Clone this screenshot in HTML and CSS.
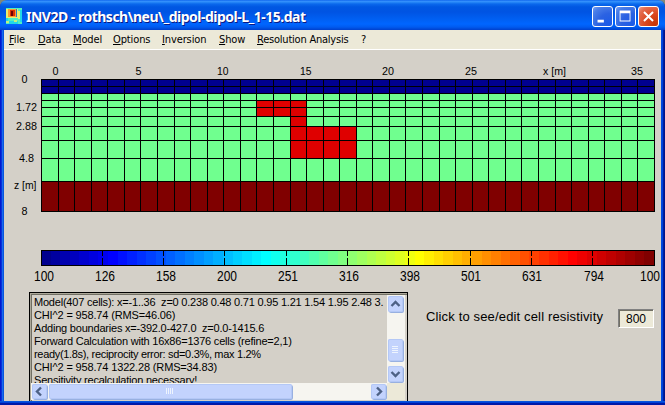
FILE: index.html
```html
<!DOCTYPE html>
<html lang="en">
<head>
<meta charset="utf-8">
<title>INV2D - rothsch\neu\_dipol-dipol-L_1-15.dat</title>
<link rel="stylesheet" href="styles.css">
</head>
<body>
<div class="window">
  <header class="titlebar">
    <svg class="app-icon" width="16" height="16" shape-rendering="crispEdges">
      <rect width="16" height="16" fill="#50f0c0"/>
      <path fill="#20d8e8" d="M0 9h2v4h-2zM14 2h2v12h-2zM3 13h9v3h-9z"/>
      <path fill="#e8f070" d="M0 1h12v9h-12zM12 3h2v8h-2z"/>
      <path fill="#ff9a30" d="M2 1h8v8h-8z"/>
      <path fill="#d83000" d="M4 2h5v6h-5z"/>
      <path fill="#700000" d="M5 3h2v5h-2z"/>
      <path fill="#2878c8" d="M10 1h1v8h-1z"/>
      <path fill="#c0f080" d="M0 13h3v2h-3zM8 12h3v2h-3z"/>
    </svg>
    <h1 class="title">INV2D - rothsch\neu\_dipol-dipol-L_1-15.dat</h1>
    <div class="controls">
      <svg class="control" viewBox="0 0 21 21"><path d="M5 14h7v3H5z" fill="#fff"/></svg>
      <svg class="control" viewBox="0 0 21 21"><path d="M4 4h12v12H4zM5 7v8h10V7z" fill="#fff" fill-rule="evenodd"/></svg>
      <svg class="control close" viewBox="0 0 21 21"><path d="M5.5 5.5l10 10M15.5 5.5l-10 10" stroke="#fff" stroke-width="2.2"/></svg>
    </div>
  </header>
  <nav class="menu">
    <span class="m-file"><u>F</u>ile</span><span class="m-data"><u>D</u>ata</span><span class="m-model"><u>M</u>odel</span><span class="m-options"><u>O</u>ptions</span><span class="m-inversion"><u>I</u>nversion</span><span class="m-show"><u>S</u>how</span><span class="m-res"><u>R</u>esolution Analysis</span><span>?</span>
  </nav>
  <main class="client">
    <svg class="plot" id="plot" width="657" height="240" viewBox="4 50 657 240"></svg>
    <div class="bottom">
      <section class="log">
        <div class="log-text">
          <p class="tight">Model(407 cells): x=-1..36&nbsp; z=0 0.238 0.48 0.71 0.95 1.21 1.54 1.95 2.48 3.</p>
          <p>CHI^2 = 958.74 (RMS=46.06)</p>
          <p class="tight">Adding boundaries x=-392.0-427.0&nbsp; z=0.0-1415.6</p>
          <p class="tight">Forward Calculation with 16x86=1376 cells (refine=2,1)</p>
          <p class="tighter">ready(1.8s), reciprocity error: sd=0.3%, max 1.2%</p>
          <p>CHI^2 = 958.74 1322.28 (RMS=34.83)</p>
          <p class="tight">Sensitivity recalculation necessary!</p>
        </div>
        <div class="vscroll">
          <svg class="sb" viewBox="0 0 15 16"><path d="M3.5 10l4-4 4 4" /></svg>
          <svg class="sb vthumb" viewBox="0 0 15 22"><path class="grip" d="M4 7.5h6M4 9.5h6M4 11.5h6M4 13.5h6"/></svg>
          <svg class="sb" viewBox="0 0 15 16"><path d="M3.5 6l4 4 4-4" /></svg>
        </div>
        <div class="hscroll">
          <svg class="sb" viewBox="0 0 15 15"><path d="M9 3.5l-4 4 4 4" /></svg>
          <svg class="sb hthumb" viewBox="0 0 243 15"><path class="grip" d="M117.5 4v6M119.5 4v6M121.5 4v6M123.5 4v6"/></svg>
          <svg class="sb last" viewBox="0 0 15 15"><path d="M6 3.5l4 4-4 4" /></svg>
        </div>
        <div class="corner"></div>
      </section>
      <span class="hint">Click to see/edit cell resistivity</span>
      <span class="value">800</span>
    </div>
  </main>
</div>
<script src="plot.js"></script>
</body>
</html>
```
FILE: styles.css
```css
* { box-sizing: border-box; }
body { margin: 0; background: #808878; overflow: hidden; }
h1, p { margin: 0; }
.window {
  width: 665px; height: 405px;
  display: flex; flex-direction: column;
  border-radius: 7px 7px 0 0;
  overflow: hidden;
  background:
    linear-gradient(180deg, #0855dd 0 1px, #0040d8 1px 2px, #0019a8 2px 4px) 0 401px / 100% 4px no-repeat,
    linear-gradient(90deg, #0019cf 0 1px, #0831d9 1px 2px, #166aee 2px 3px, #0855dd 3px 4px, transparent 4px 661px, #0048e0 661px 662px, #0040d8 662px 663px, #001ea0 663px 664px, #00138c 664px);
}
.titlebar {
  height: 30px; flex: none;
  display: flex; align-items: center;
  padding: 3px 6px 0 6px;
  background: linear-gradient(180deg, #0058e6 0, #3a93ff 1px, #2a8bf8 2px, #0a68ec 4px, #0057e2 7px, #0054e3 12px, #005ff2 19px, #0066ff 24px, #005bf0 27px, #0040cc 30px);
}
.app-icon { flex: none; margin-top: -1px; }
.title {
  flex: 1; margin-left: 4px; margin-top: 1px;
  font: bold 14px/20px "Noto Sans", sans-serif;
  letter-spacing: -0.5px;
  color: #fff; text-shadow: 1px 1px 0 #0a1883; white-space: pre;
}
.controls { display: flex; gap: 2px; }
.control {
  width: 21px; height: 21px;
  border: 1px solid #fff; border-radius: 3px;
  background: radial-gradient(circle at 85% 90%, #1c5be8 0, #2b62e2 45%, #4a7ee8 80%, #7ba2f4 100%);
}
.close { background: radial-gradient(circle at 85% 90%, #c83404 0, #dc4a22 45%, #e46d50 80%, #f0a08c 100%); }
.menu {
  height: 20px; flex: none; margin: 0 4px; padding: 0 0 0 5px;
  display: flex;
  background: #ece9d8; border-bottom: 1px solid #fff;
  font: 11px/19px "DejaVu Sans Condensed", "DejaVu Sans", sans-serif;
  letter-spacing: -0.12px;
  color: #000; white-space: pre;
}
.menu u { text-underline-offset: 1px; text-decoration-thickness: 1px; }
.m-file { width: 29px; }
.m-data { width: 35px; }
.m-model { width: 40px; }
.m-options { width: 49px; }
.m-inversion { width: 57px; }
.m-show { width: 38px; }
.m-res { width: 104px; letter-spacing: -0.22px; }
.client { height: 351px; flex: none; margin: 0 4px; background: #d4d0c8; overflow: hidden; }
.plot { display: block; font-family: "Liberation Sans", Arial, sans-serif; }
.axis { font-size: 11px; }
.scale { font-size: 14px; }
.bottom { display: flex; align-items: flex-start; padding: 2px 0 0 25px; }
.log {
  width: 379px; height: 130px; flex: none;
  display: grid;
  grid-template: 88px 17px / 1fr 18px;
  border: 1px solid #000; padding: 2px 2px 0 1px;
  box-shadow: inset 1px 1px #aca899, inset 2px 2px #716f64;
}
.log-text {
  overflow: hidden; padding: 1px 0 0 3px;
  font: 11px/13px "Liberation Sans", Arial, sans-serif;
  letter-spacing: -0.15px;
}
.log-text p { white-space: nowrap; }
.tight { letter-spacing: -0.21px; }
.tighter { letter-spacing: -0.32px; }
.vscroll, .hscroll { display: flex; padding: 1px; background: #f6f5f0; }
.vscroll { flex-direction: column; justify-content: space-between; }
.sb {
  display: block; width: 15px; height: 16px; flex: none;
  border-radius: 2px; background: #c3d3fd;
  box-shadow: inset 0 0 0 1px #b4c8f6, 1px 1px #98b0e0;
  fill: none; stroke: #4d6185; stroke-width: 2.4;
}
.vthumb { height: 22px; margin-top: 21px; }
.hscroll { gap: 2px; }
.hscroll .sb { height: 15px; }
.hscroll .hthumb { width: 243px; }
.last { margin-left: auto; }
.sb .grip { stroke: #eef4fe; stroke-width: 1; }
.corner { background: #ece9d8; }
.hint {
  margin: 16px 0 0 18px; width: 192px;
  font: 13px/18px "Liberation Sans", Arial, sans-serif; white-space: pre;
  letter-spacing: 0.15px;
}
.value {
  width: 36px; height: 19px; margin-top: 17px;
  border: 1px solid; border-color: #808080 #fff #fff #808080;
  box-shadow: inset 1px 1px #716f64;
  background: #ece9d8; text-align: center;
  font: 12px/19px "Liberation Sans", Arial, sans-serif;
}
```
FILE: plot.js
```js
const xs = [41,58,74,91,107,124,140,157,174,190,207,223,240,256,273,290,306,323,339,356,372,389,405,422,439,455,472,488,505,521,538,555,571,588,604,621,637,654];
const ys = [79,86,93,100,107,116,126,140,158,181,211];
const parts = [];
const rect = (x, y, w, h, fill) =>
  parts.push(`<rect x="${x}" y="${y}" width="${w}" height="${h}" fill="${fill}" shape-rendering="crispEdges"/>`);
const text = (x, y, w, s, cls) =>
  parts.push(`<text class="${cls}" x="${x}" y="${y}" textLength="${w}" lengthAdjust="spacingAndGlyphs">${s}</text>`);

// Model cells: background layers, then the anomalous body
rect(41, 79, 614, 14, '#00008f');
rect(41, 93, 614, 88, '#70ff8f');
rect(41, 181, 614, 30, '#800000');
rect(256, 100, 50, 16, '#df0000');
rect(290, 116, 16, 10, '#df0000');
rect(290, 126, 66, 32, '#df0000');
xs.forEach(x => rect(x, 79, 1, 133, '#000'));
ys.forEach(y => rect(41, y, 614, 1, '#000'));

// 64 step jet colour scale
const ramp = v => Math.round(255 * Math.max(0, Math.min(1, v)));
for (let i = 0; i < 64; i++) {
  const n = i + 1;
  const r = ramp(Math.min((n - 24) / 16, (72 - n) / 16));
  const g = ramp(Math.min((n - 8) / 16, (56 - n) / 16));
  const b = ramp(Math.min((n + 8) / 16, (40 - n) / 16));
  const x0 = Math.round(41 + i * 613 / 64), x1 = Math.round(41 + (i + 1) * 613 / 64);
  rect(x0, 250, x1 - x0, 16, `rgb(${r},${g},${b})`);
}
[41, 654].forEach(x => rect(x, 250, 1, 16, '#000'));
[250, 265].forEach(y => rect(41, y, 614, 1, '#000'));
[102,163,224,286,347,408,470,531,592].forEach(x => {
  rect(x, 251, 1, 5, '#000');
  rect(x, 258, 1, 7, '#000');
});

[[52.5,6,'0'],[135.5,6,'5'],[217,11.5,'10'],[300,11.5,'15'],[382,12,'20'],[465,12,'25'],[543,23,'x [m]'],[631,12,'35']]
  .forEach(([x, w, s]) => text(x, 75, w, s, 'axis'));
[[21.5,83,6,'0'],[16,111,21,'1.72'],[16,130,21,'2.88'],[19,162,15,'4.8'],[14,189,22.5,'z [m]'],[21.5,215,6,'8']]
  .forEach(([x, y, w, s]) => text(x, y, w, s, 'axis'));
[[34,'100'],[95,'126'],[156,'158'],[217,'200'],[278,'251'],[339,'316'],[400,'398'],[461,'501'],[522,'631'],[584,'794'],[640,'100']]
  .forEach(([x, s]) => text(x, 281, 20, s, 'scale'));

document.getElementById('plot').innerHTML = parts.join('');
```
